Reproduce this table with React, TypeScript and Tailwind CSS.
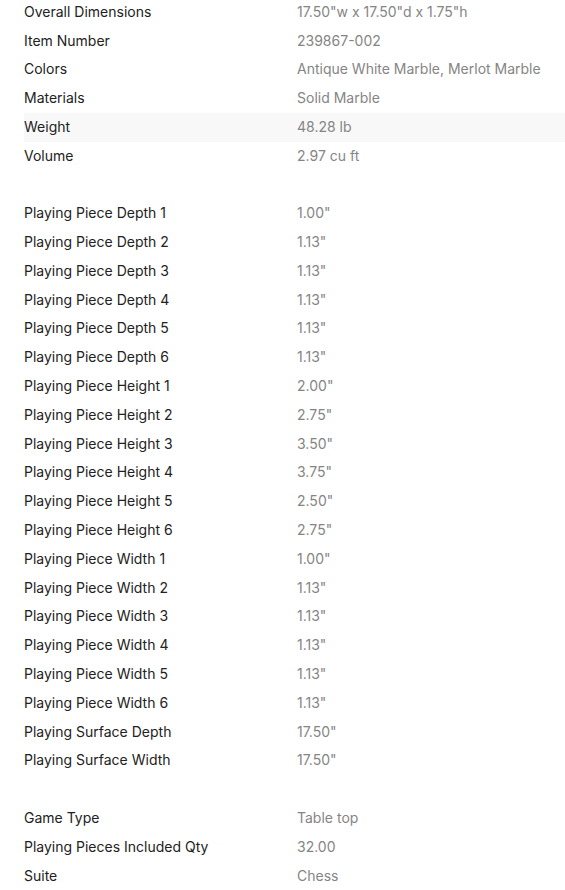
import React from "react";

type Row = [string, string];

const groups: Row[][] = [
  [
    ["Overall Dimensions", "17.50\"w x 17.50\"d x 1.75\"h"],
    ["Item Number", "239867-002"],
    ["Colors", "Antique White Marble, Merlot Marble"],
    ["Materials", "Solid Marble"],
    ["Weight", "48.28 lb"],
    ["Volume", "2.97 cu ft"],
  ],
  [
    ["Playing Piece Depth 1", "1.00\""],
    ["Playing Piece Depth 2", "1.13\""],
    ["Playing Piece Depth 3", "1.13\""],
    ["Playing Piece Depth 4", "1.13\""],
    ["Playing Piece Depth 5", "1.13\""],
    ["Playing Piece Depth 6", "1.13\""],
    ["Playing Piece Height 1", "2.00\""],
    ["Playing Piece Height 2", "2.75\""],
    ["Playing Piece Height 3", "3.50\""],
    ["Playing Piece Height 4", "3.75\""],
    ["Playing Piece Height 5", "2.50\""],
    ["Playing Piece Height 6", "2.75\""],
    ["Playing Piece Width 1", "1.00\""],
    ["Playing Piece Width 2", "1.13\""],
    ["Playing Piece Width 3", "1.13\""],
    ["Playing Piece Width 4", "1.13\""],
    ["Playing Piece Width 5", "1.13\""],
    ["Playing Piece Width 6", "1.13\""],
    ["Playing Surface Depth", "17.50\""],
    ["Playing Surface Width", "17.50\""],
  ],
  [
    ["Game Type", "Table top"],
    ["Playing Pieces Included Qty", "32.00"],
    ["Suite", "Chess"],
  ],
];

export default function App() {
  return (
    <div
      className="bg-white w-[565px] h-[890px] overflow-hidden pl-6"
      style={{ fontFamily: "Inter, 'Noto Sans', sans-serif" }}
    >
      <div className="mt-[-2.2px] flex flex-col gap-[28.8px]">
        {groups.map((g, gi) => (
          <div key={gi} className="flex flex-col">
            {g.map(([k, v]) => (
              <div
                key={k}
                className={`flex h-[28.8px] items-center pb-[2px] text-[14px] ${
                  k === "Weight" ? "bg-[#f8f8f8]" : ""
                }`}
              >
                <div className="w-[273px] shrink-0 text-[#222222]">{k}</div>
                <div className="text-[#858585]">{v}</div>
              </div>
            ))}
          </div>
        ))}
      </div>
    </div>
  );
}
